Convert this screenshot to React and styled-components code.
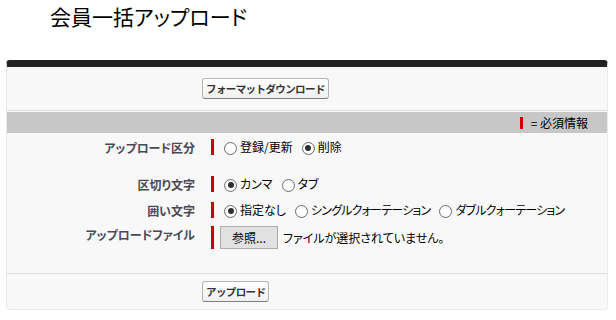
import React from "react";
import styled, { createGlobalStyle } from "styled-components";

const GlobalStyle = createGlobalStyle`
    body {
        margin: 0;
        background: #fff;
        font-family: "Liberation Sans", Arial, "Noto Sans CJK JP", sans-serif;
        font-feature-settings: "palt";
        color: #000;
    }
`;

const Page = styled.div`
    width: 616px;
    height: 320px;
    padding: 0 8px 0 6px;
    box-sizing: border-box;
`;

const Title = styled.h1`
    margin: 0;
    padding: 4px 0 0 44px;
    height: 60px;
    box-sizing: border-box;
    font-size: 21px;
    line-height: 24px;
    font-weight: normal;
    font-family: "Noto Sans CJK JP", sans-serif;
`;

const Block = styled.div`
    width: 602px;
    box-sizing: border-box;
    background: #f8f8f8;
    border: 1px solid #eaeaea;
    border-top: 7px solid #222;
    border-radius: 4px;
`;

const ButtonBar = styled.div`
    display: flex;
    padding: ${p => (p.bottom ? "7px 0 7px 195px" : "11px 0 11px 195px")};
    border-top: ${p => (p.bottom ? "1px solid #dbdbdb" : "none")};
    border-bottom: ${p => (p.bottom ? "none" : "1px solid #dbdbdb")};
`;

const Btn = styled.button`
    height: 21px;
    padding: 0 3px;
    font-family: "Noto Sans CJK JP", sans-serif;
    font-size: 10.5px;
    letter-spacing: -0.6px;
    font-weight: bold;
    color: #333;
    background: linear-gradient(#ffffff, #f0f0f0);
    border: 1px solid #b5b5b5;
    border-bottom-color: #7f7f7f;
    border-radius: 3px;
    line-height: 19px;
`;

const SubHeader = styled.div`
    margin-top: 1px;
    height: 21px;
    background: #c7c7c7;
    display: flex;
    justify-content: flex-end;
    align-items: center;
    padding-right: 19px;
    font-size: 12px;
`;

const Legend = styled.span`
    display: flex;
    align-items: center;
    gap: 8px;
    font-family: "Noto Sans CJK JP", sans-serif;
`;

const RedMark = styled.span`
    display: inline-block;
    width: 3px;
    height: 12px;
    background: #c00;
`;

const FormBody = styled.div`
    padding: 6px 0 24px;
`;

const Row = styled.div`
    display: grid;
    grid-template-columns: 188px 1fr;
    column-gap: 16px;
    align-items: start;
    margin-bottom: ${p => p.after || 0}px;
`;

const Label = styled.div`
    text-align: right;
    font-family: "Noto Sans CJK JP", sans-serif;
    font-size: 12px;
    font-weight: bold;
    color: #4a4a56;
    line-height: 16px;
    padding-top: 1px;
`;

const Required = styled.div`
    display: flex;
    align-items: center;
    gap: 9px;
    min-height: ${p => p.tall || 16}px;
    border-left: 3px solid #c00;
    padding-left: ${p => p.pad || 10}px;
    font-family: "Noto Sans CJK JP", sans-serif;
    font-size: 12px;
`;

const Option = styled.label`
    display: flex;
    align-items: center;
    gap: 3px;
    line-height: 16px;
    letter-spacing: ${p => (p.kana ? "-0.8px" : "0")};
`;

const Radio = styled.input.attrs({ type: "radio" })`
    appearance: none;
    margin: 2px 0 0 0;
    width: 13px;
    height: 13px;
    border-radius: 50%;
    border: 1px solid #6e6e6e;
    background: radial-gradient(circle, #fff 55%, #e8e8e8);
    box-sizing: border-box;
    position: relative;
    &:checked::after {
        content: "";
        position: absolute;
        left: 2.5px;
        top: 2.5px;
        width: 6px;
        height: 6px;
        border-radius: 50%;
        background: #2f2f2f;
    }
`;

const Browse = styled.button`
    height: 23px;
    width: 58px;
    font-family: "Noto Sans CJK JP", sans-serif;
    font-size: 12px;
    color: #000;
    background: #e1e1e1;
    border: 1px solid #adadad;
    border-radius: 0;
    padding: 0;
`;

const FileNote = styled.span`
    margin-left: -4px;
`;

const fields = [
    { label: "アップロード区分", name: "kind", options: ["登録/更新", "削除"], checked: 1, after: 20 },
    { label: "区切り文字", name: "sep", options: ["カンマ", "タブ"], checked: 0, after: 9 },
    { label: "囲い文字", name: "quote", options: ["指定なし", "シングルクォーテーション", "ダブルクォーテーション"], checked: 0, after: 7 },
];

export default function App() {
    return (
        <Page>
            <GlobalStyle />
            <Title>会員一括アップロード</Title>
            <Block>
                <ButtonBar>
                    <Btn>フォーマットダウンロード</Btn>
                </ButtonBar>
                <SubHeader>
                    <Legend>
                        <RedMark />= 必須情報
                    </Legend>
                </SubHeader>
                <FormBody>
                    {fields.map(f => (
                        <Row key={f.name} after={f.after}>
                            <Label>{f.label}</Label>
                            <Required>
                                {f.options.map((o, i) => (
                                    <Option key={o} kana={o.length > 6}>
                                        <Radio name={f.name} defaultChecked={i === f.checked} />
                                        {o}
                                    </Option>
                                ))}
                            </Required>
                        </Row>
                    ))}
                    <Row>
                        <Label>アップロードファイル</Label>
                        <Required tall={23} pad={6}>
                            <Browse>参照...</Browse>
                            <FileNote>ファイルが選択されていません。</FileNote>
                        </Required>
                    </Row>
                </FormBody>
                <ButtonBar bottom>
                    <Btn>アップロード</Btn>
                </ButtonBar>
            </Block>
        </Page>
    );
}
